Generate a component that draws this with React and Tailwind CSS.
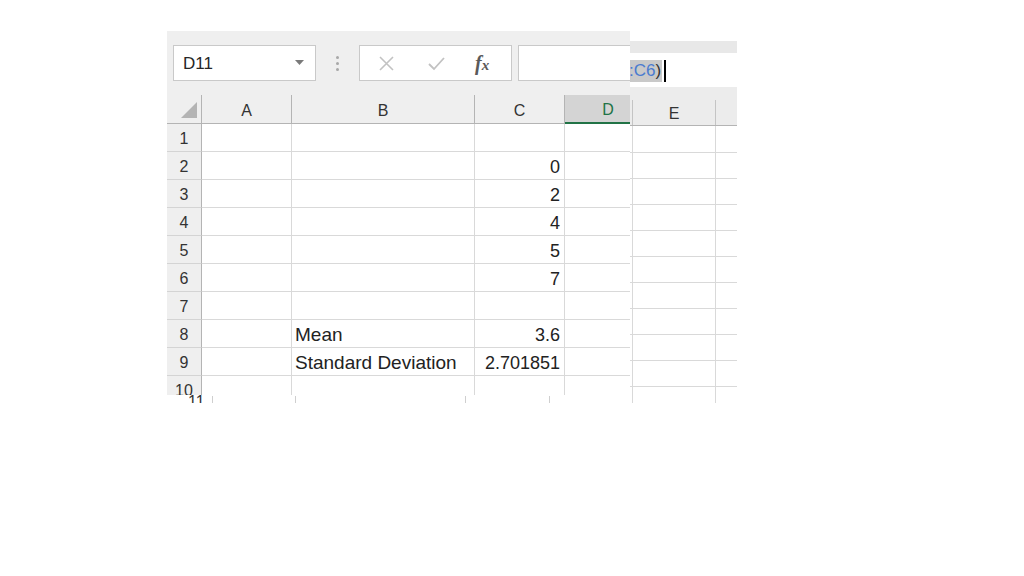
import React from "react";

const font = { fontFamily: '"Liberation Sans", Arial, sans-serif' };

const rows = [
  { n: 1, b: "", c: "" },
  { n: 2, b: "", c: "0" },
  { n: 3, b: "", c: "2" },
  { n: 4, b: "", c: "4" },
  { n: 5, b: "", c: "5" },
  { n: 6, b: "", c: "7" },
  { n: 7, b: "", c: "" },
  { n: 8, b: "Mean", c: "3.6" },
  { n: 9, b: "Standard Deviation", c: "2.701851" },
  { n: 10, b: "", c: "" },
];

function MainSheet() {
  return (
    <div className="absolute left-[167px] top-[31px] w-[463px] h-[364px] overflow-hidden bg-[#efefef] flex flex-col" style={font}>
      {/* toolbar */}
      <div className="h-[64px] shrink-0 flex items-start pt-[14px] pl-[6px]">
        <div className="w-[143px] h-[36px] shrink-0 bg-white border border-[#c9c9c9] flex items-center justify-between pl-[9px] pr-[11px]">
          <span className="text-[17px] text-[#262626] pt-[2px]">D11</span>
          <svg width="9" height="6" viewBox="0 0 9 6"><polygon points="0,0 9,0 4.5,5" fill="#7a7a7a" /></svg>
        </div>
        <div className="w-[43px] h-[36px] shrink-0 flex items-center justify-center">
          <div className="flex flex-col gap-[3px]">
            <div className="w-[3px] h-[3px] rounded-full bg-[#a8a8a8]" />
            <div className="w-[3px] h-[3px] rounded-full bg-[#a8a8a8]" />
            <div className="w-[3px] h-[3px] rounded-full bg-[#a8a8a8]" />
          </div>
        </div>
        <div className="w-[153px] h-[36px] shrink-0 bg-white border border-[#c9c9c9] flex items-center pl-[19px]">
          <svg width="15" height="15" viewBox="0 0 15 15"><path d="M1 1 L14 14 M14 1 L1 14" stroke="#c2c2c2" strokeWidth="1.6" /></svg>
          <svg className="ml-[34px]" width="17" height="15" viewBox="0 0 17 15"><path d="M1 8 L6 13 L16 2" stroke="#c2c2c2" strokeWidth="1.8" fill="none" /></svg>
          <span className="ml-[30px] text-[20px] italic font-bold text-[#5a5a5a] leading-none" style={{ fontFamily: '"Liberation Serif", serif' }}>f<span className="text-[15px]">x</span></span>
        </div>
        <div className="ml-[6px] flex-1 h-[36px] bg-white border border-r-0 border-[#c9c9c9]" />
      </div>
      {/* header */}
      <div className="h-[29px] shrink-0 flex text-[16px] text-[#333]">
        <div className="w-[35px] shrink-0 border-r border-b border-[#b4b4b4] flex items-end justify-end pr-[4px] pb-[5px]">
          <svg width="16" height="16" viewBox="0 0 16 16"><polygon points="16,0 16,16 0,16" fill="#b4b4b4" /></svg>
        </div>
        <div className="w-[90px] shrink-0 border-r border-b border-[#b4b4b4] flex items-center justify-center pt-[3px]">A</div>
        <div className="w-[183px] shrink-0 border-r border-b border-[#b4b4b4] flex items-center justify-center pt-[3px]">B</div>
        <div className="w-[90px] shrink-0 border-r border-b border-[#b4b4b4] flex items-center justify-center pt-[3px]">C</div>
        <div className="w-[86px] shrink-0 bg-[#d4d4d4] border-b-2 border-[#217346] text-[#217346] flex items-center justify-center pt-[3px]">D</div>
      </div>
      {/* rows */}
      {rows.map((r) => (
        <div key={r.n} className="h-[28px] shrink-0 flex">
          <div className="w-[35px] shrink-0 border-r border-b border-r-[#b4b4b4] border-b-[#d4d4d4] flex items-center justify-center pt-[2px] text-[16px] text-[#333]">{r.n}</div>
          <div className="w-[90px] shrink-0 bg-white border-r border-b border-[#d9d9d9]" />
          <div className="w-[183px] shrink-0 bg-white border-r border-b border-[#d9d9d9] flex items-center pl-[3px] pt-[3px] text-[19px] text-[#222] whitespace-nowrap">{r.b}</div>
          <div className="w-[90px] shrink-0 bg-white border-r border-b border-[#d9d9d9] flex items-center justify-end pr-[4px] pt-[3px] text-[18px] text-[#222]">{r.c}</div>
          <div className="w-[86px] shrink-0 bg-white border-b border-[#d9d9d9]" />
        </div>
      ))}
    </div>
  );
}

function BottomStrip() {
  return (
    <div className="absolute left-[167px] top-[395px] w-[463px] h-[8px] overflow-hidden bg-white" style={font}>
      <div className="absolute left-[21px] top-[-1px] text-[16px] leading-[16px] text-[#333]">11</div>
      <div className="absolute left-[45px] top-[1px] w-px h-[7px] bg-[#cfcfcf]" />
      <div className="absolute left-[128px] top-[1px] w-px h-[7px] bg-[#cfcfcf]" />
      <div className="absolute left-[298px] top-[1px] w-px h-[7px] bg-[#cfcfcf]" />
      <div className="absolute left-[382px] top-[1px] w-px h-[7px] bg-[#cfcfcf]" />
    </div>
  );
}

function Overlay() {
  const lines = [27, 26, 26, 26, 26, 26, 26, 26, 26, 26, 26];
  return (
    <div className="absolute left-[630px] top-[41px] w-[107px] h-[362px] overflow-hidden bg-white flex flex-col" style={font}>
      <div className="h-[12px] shrink-0 bg-[#e8e8e8]" />
      <div className="h-[34px] shrink-0 bg-white flex items-center pt-[2px]">
        <div className="ml-[-1px] h-[22px] flex items-center bg-[#c9c9c9] pr-[1px] text-[17px]">
          <span className="text-[#4a7bd0]">:C6</span>
          <span className="text-[#333]">)</span>
        </div>
        <div className="ml-[2px] w-[2px] h-[22px] bg-black" />
      </div>
      <div className="h-[39px] shrink-0 bg-[#ececec] border-b border-[#b4b4b4] flex items-end text-[16px] text-[#333]">
        <div className="w-[2px] shrink-0" />
        <div className="w-[84px] h-[25px] shrink-0 border-l border-r border-[#c4c4c4] flex items-center justify-center pt-[2px]">E</div>
      </div>
      {lines.map((h, i) => (
        <div key={i} className="shrink-0 flex border-b border-[#d9d9d9]" style={{ height: h }}>
          <div className="w-[2px] shrink-0" />
          <div className="w-[84px] shrink-0 border-l border-r border-[#d9d9d9]" />
        </div>
      ))}
    </div>
  );
}

export default function App() {
  return (
    <div className="relative w-[1024px] h-[576px] bg-white overflow-hidden">
      <MainSheet />
      <BottomStrip />
      <Overlay />
    </div>
  );
}
